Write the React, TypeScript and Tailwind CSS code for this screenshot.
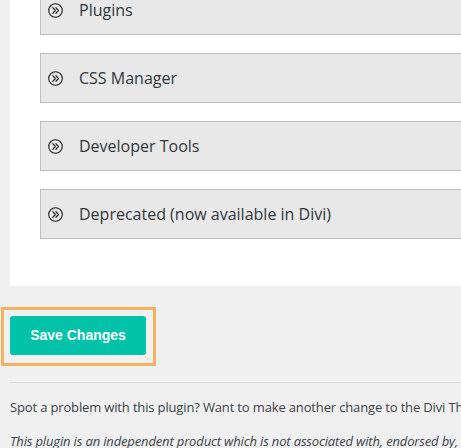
const sections = [
  "Plugins",
  "CSS Manager",
  "Developer Tools",
  "Deprecated (now available in Divi)",
];

const ChevronCircle = () => (
  <svg width="15" height="15" viewBox="0 0 15 15" fill="none" className="shrink-0">
    <circle cx="7.5" cy="7.5" r="6.8" stroke="#1d1d1d" strokeWidth="1.1" />
    <path
      d="M4.8 4.6 L7.3 7.5 L4.8 10.4 M7.9 4.6 L10.4 7.5 L7.9 10.4"
      stroke="#1d1d1d"
      strokeWidth="1.15"
      strokeLinecap="round"
      strokeLinejoin="round"
    />
  </svg>
);

const App = () => {
  return (
    <div className="h-[448px] w-[461px] overflow-hidden bg-[#f0f0f0] font-['Open_Sans',sans-serif] text-[#3c434a]">
      {/* settings panel, top scrolled out of view */}
      <section className="ml-[10px] -mt-[15px] flex w-[520px] flex-col gap-[18px] bg-white pb-[47px] pl-[30px]">
        {sections.map((title) => (
          <div
            key={title}
            className="flex h-[50px] items-center gap-[16px] border border-[#bfbfbf] bg-[#e8e8e8] pl-[7px] text-[16px] text-[#32373c]"
          >
            <ChevronCircle />
            <span>{title}</span>
          </div>
        ))}
      </section>

      <div className="ml-[1px] mt-[21px] w-fit border-[3px] border-[#f6b35f] pb-[8px] pl-[6px] pr-[7px] pt-[6px]">
        <button
          type="button"
          className="h-[39px] w-[136px] rounded-[3px] bg-[#00c2a8] font-['Liberation_Sans',sans-serif] text-[14px] font-bold text-white"
        >
          Save Changes
        </button>
      </div>

      <hr className="ml-[10px] mt-[16px] border-t border-[#dcdcdc]" />

      <div className="ml-[10px] mt-[14px] whitespace-nowrap text-[13px] leading-[21px] tracking-[-0.15px]">
        <p>Spot a problem with this plugin? Want to make another change to the Divi Theme?</p>
        <p className="mt-[13px] italic">
          This plugin is an independent product which is not associated with, endorsed by, or supported by Elegant Themes.
        </p>
      </div>
    </div>
  );
};

export default App;
